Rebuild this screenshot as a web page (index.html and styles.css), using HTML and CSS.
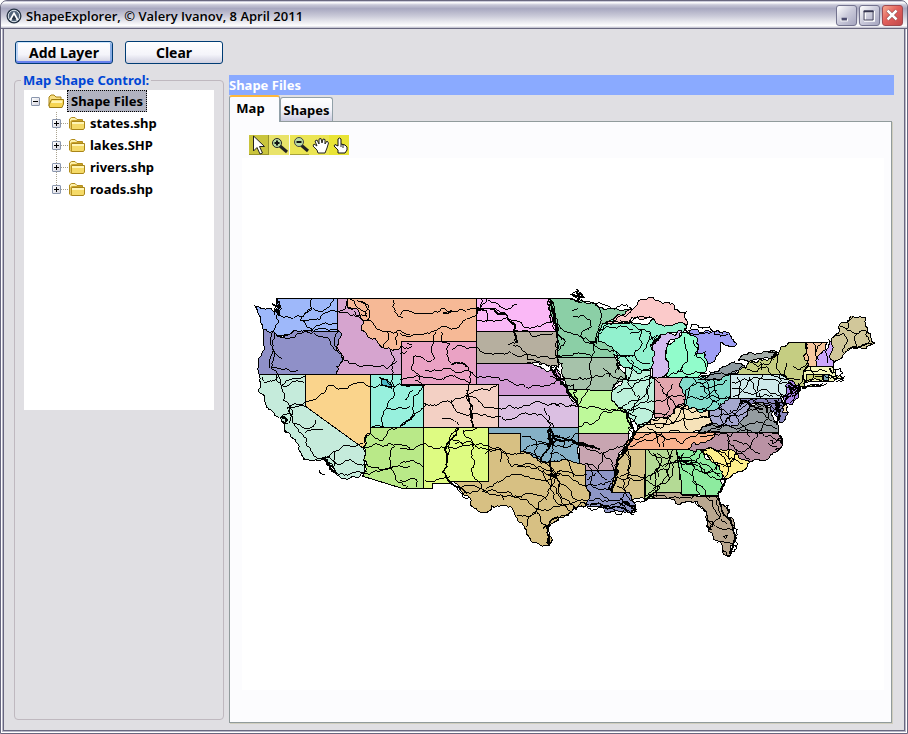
FILE: index.html
```
<!DOCTYPE html>
<html lang="en">
<head>
<meta charset="utf-8">
<title>ShapeExplorer</title>
<link rel="stylesheet" href="styles.css">
</head>
<body>
<svg class="defs" aria-hidden="true">
  <symbol id="folder" viewBox="0 0 16 16">
    <path d="M1 13V4L3 2H6L8 4H13V7" fill="#f8df83" stroke="#a88416"/>
    <path d="M1.5 14.5L1 12L3.500 6.500H15.500V11L14 14.500Z" fill="#f6d552" stroke="#9c7b10"/>
    <path d="M4 7.500H14.500L14 10H3Z" fill="#fff3b0"/>
  </symbol>
  <symbol id="folder-closed" viewBox="0 0 16 16">
    <path d="M.5 13V4L2.500 2.500H6L8 4.500H13.500V7" fill="#fdf0a8" stroke="#b28d1c"/>
    <path d="M2.500 14.500V6.500H15.500V13L14.500 14.500Z" fill="#f5da68" stroke="#a98519"/>
    <path d="M.5 13L2 14.500V6L4 5.500H13" fill="none" stroke="#c9a227"/>
    <path d="M3 7H15V9H3Z" fill="#fff5b5"/>
  </symbol>
</svg>
<div class="window">
  <header class="titlebar">
    <svg class="app-icon" viewBox="0 0 16 16" aria-hidden="true">
      <circle cx="8" cy="8" r="7.500" fill="#283546"/>
      <circle cx="8" cy="8" r="5.700" fill="#52647a" stroke="#d9e2ea"/>
      <path d="M3.500 11.500L8 3.500L12.500 11.500L10.500 12.500L8 8.500L5.500 12.500Z" fill="#fff"/>
      <path d="M8 7L5.500 11.500H10.500Z" fill="#283546"/>
    </svg>
    <h1>ShapeExplorer, © Valery Ivanov, 8 April 2011</h1>
    <button class="win-btn" aria-label="Minimize"><svg viewBox="0 0 21 21"><path d="M4 14H12V17H4Z" fill="#fff"/><path d="M5 13H11V16H5Z" fill="#4b4b6e"/></svg></button>
    <button class="win-btn" aria-label="Maximize"><svg viewBox="0 0 21 21"><path d="M5.500 6.500H15.500V16.500H5.500Z" fill="none" stroke="#fff" stroke-width="2"/><path d="M4.500 5.500H14.500V15.500H4.500Z" fill="none" stroke="#33334f"/><path d="M4 5H15V7H4Z" fill="#33334f"/></svg></button>
    <button class="win-btn close" aria-label="Close"><svg viewBox="0 0 21 21"><path d="M5 5L15 15M15 5L5 15" stroke="#6e3030" stroke-width="4"/><path d="M5 5L15 15M15 5L5 15" stroke="#fff" stroke-width="3"/></svg></button>
  </header>
  <div class="content">
    <aside class="side">
      <div class="actions">
        <button class="btn default">Add Layer</button>
        <button class="btn">Clear</button>
      </div>
      <fieldset class="group">
        <legend>Map Shape Control:</legend>
        <ul class="tree">
          <li>
            <div class="node"><span class="toggle"></span><svg class="folder"><use href="#folder"/></svg><span class="label selected">Shape Files</span></div>
            <ul class="children">
              <li class="node"><span class="toggle plus"></span><svg class="folder"><use href="#folder-closed"/></svg><span class="label">states.shp</span></li>
              <li class="node"><span class="toggle plus"></span><svg class="folder"><use href="#folder-closed"/></svg><span class="label">lakes.SHP</span></li>
              <li class="node"><span class="toggle plus"></span><svg class="folder"><use href="#folder-closed"/></svg><span class="label">rivers.shp</span></li>
              <li class="node"><span class="toggle plus"></span><svg class="folder"><use href="#folder-closed"/></svg><span class="label">roads.shp</span></li>
            </ul>
          </li>
        </ul>
      </fieldset>
    </aside>
    <main class="main">
      <h2 class="banner">Shape Files</h2>
      <div class="tabs" role="tablist">
        <button class="tab active" role="tab" aria-selected="true">Map</button>
        <button class="tab" role="tab" aria-selected="false">Shapes</button>
      </div>
      <section class="panel">
        <div class="tools">
          <button class="tool t1" aria-label="Select"><svg viewBox="0 0 20 20"><path d="M4.500 1V16L8 12.500L11 19L13.500 18L10.500 11.500H15.500Z" fill="#fff" stroke="#222"/></svg></button>
          <button class="tool t2" aria-label="Zoom in"><svg viewBox="0 0 20 20"><path d="M11 11L18 17" stroke="#222" stroke-width="3"/><circle cx="8" cy="8" r="4.500" fill="#b9dca4" stroke="#222"/><path d="M5.500 8H10.500M8 5.500V10.500" stroke="#111" stroke-width="2"/></svg></button>
          <button class="tool t3" aria-label="Zoom out"><svg viewBox="0 0 20 20"><path d="M12 10L19 16" stroke="#222" stroke-width="3"/><circle cx="10" cy="7" r="4.500" fill="#b9dca4" stroke="#444"/><path d="M7.500 7H12.500" stroke="#111" stroke-width="2"/></svg></button>
          <button class="tool t4" aria-label="Pan"><svg viewBox="0 0 20 20"><path d="M9 18L8 15L4 11L5 9L8 11L6 6L8 5L10 9L10 4L12 3.500L13 8L14 4L16 4.500L16 9L18 6L19.500 8L18 13L16 18Z" fill="#fff" stroke="#222"/></svg></button>
          <button class="tool t5" aria-label="Identify"><svg viewBox="0 0 20 20"><path d="M9 18V15L5 11L6 9.500L9 11V4L10.500 3L12 4V9L16 10L18 12V15L16 18Z" fill="#fff" stroke="#111"/><path d="M14 10V13M12 9V12" stroke="#222"/></svg></button>
        </div>
        <svg class="map" viewBox="242 158 642 532" role="img" aria-label="United States with lakes, rivers and roads">
          <g class="states">
            <path fill="#9eb8fa" d="M276 298H337V331H313L277 336L273 331L263 329L260 322L259 315L255 306L258 306L262 309L270 308L275 311L278 306Z"/>
            <path fill="#8f90c8" d="M263 329L273 331L277 336L290 334L313 331H338L342 334L336 349L337 374H259L258 364L262 355L263 340Z"/>
            <path fill="#c5ebdb" d="M259 374H305V406L363 448L368 455L364 463V473L337 475L333 468L322 459L301 453L298 444L291 437L285 432L285 424L280 417L271 410L266 405L265 398L258 391L261 383Z"/>
            <path fill="#fad48c" d="M305 374H370V434L365 438L363 448L305 406Z"/>
            <path fill="#d6a4cf" d="M337 298H347V307L362 319L367 335L375 338L384 348L401 346V374H337L336 349L342 334L338 331Z"/>
            <path fill="#f6b996" d="M347 298H476V341H401V346L384 348L375 338L367 335L362 319L347 307Z"/>
            <path fill="#eaa2c4" d="M401 341H476V384H401Z"/>
            <path fill="#97f0dd" d="M370 374H401V385H423V427H370Z"/>
            <path fill="#f3d0c4" d="M423 384H498V427H423Z"/>
            <path fill="#b9e988" d="M370 427H423V488H401L362 476L366 470L363 460L363 448L365 438L370 434Z"/>
            <path fill="#defb82" d="M423 427H488V481H448L450 483H432V488H423Z"/>
            <path fill="#fab8f6" d="M476 298H551L553 315L556 331H476Z"/>
            <path fill="#b6af9f" d="M476 331H556L559 340L558 367L545 364L527 363H476Z"/>
            <path fill="#d29bd4" d="M476 363H527L537 366L556 368L561 378L566 388L569 395H498V384H476Z"/>
            <path fill="#dbbfe2" d="M498 395H569L574 402L578 406V427H498Z"/>
            <path fill="#85b0c6" d="M488 427H578L581 443L580 463L571 461L560 461L546 462L533 457L520 453V433H488Z"/>
            <path fill="#d7c083" d="M488 433H520V453L533 457L546 462L560 461L571 461L580 463L585 465V482L590 492L587 504L572 511L560 517L551 524L547 532L550 546L540 545L531 541L526 534L524 526L515 513L506 505L492 506L486 513L473 507L470 498L460 490L448 481H488Z"/>
            <path fill="#8bcfa6" d="M551 298H569L575 301L588 303L599 307L612 308L630 309L612 320L604 327L598 333V342L614 352L615 357H557V331L553 320Z"/>
            <path fill="#a6c2aa" d="M557 357H615L619 368L626 376L616 384L612 391L567 389L561 372Z"/>
            <path fill="#bef99a" d="M567 389L612 391L614 400L623 408L631 420L633 427L629 433H578V406Z"/>
            <path fill="#c8a5b1" d="M578 433H629L624 445L617 458V470H585V465L580 463Z"/>
            <path fill="#8e96c6" d="M585 470H616L613 492H631L632 500L636 509L629 513L621 511L612 511L598 506H587L590 492L585 482Z"/>
            <path fill="#d7c38a" d="M627 449H646L644 499L632 500L630 492H612L616 475V460Z"/>
            <path fill="#b4da95" d="M646 449H676L681 480V492H656L655 498H645Z"/>
            <path fill="#8deb9f" d="M676 449H700L704 455L714 463L722 478L721 491L718 496L681 494V480Z"/>
            <path fill="#b9a78f" d="M653 492H680L682 495L713 497L719 494L721 504L728 517L734 533V543L730 556L723 553L722 545L713 536L708 530L707 512L697 501L689 501L680 505L670 498H653Z"/>
            <path fill="#fdee8b" d="M700 450L710 447L725 451L735 452L750 462L740 472L725 480L720 470L710 459Z"/>
            <path fill="#ba92a4" d="M717 432H779L783 442L781 447L773 453L769 458L757 460L750 462L735 452L725 451L710 447L700 450L688 449L700 443Z"/>
            <path fill="#f9b38e" d="M635 432H717L710 440L700 443L688 449H627L630 440Z"/>
            <path fill="#f6e2b9" d="M635 432L638 425L648 423L657 418L672 414L684 404L695 408L707 410L712 423L700 430L693 432Z"/>
            <path fill="#949ca0" d="M693 432L713 423L727 425L740 422L750 407L762 402L770 408L773 417L778 425V432Z"/>
            <path fill="#a5a8cf" d="M729 398H740V404L750 405L748 415L740 422L727 425L713 423L710 411L720 406Z"/>
            <path fill="#8a88bd" d="M740 398H781L783 412H788L785 417L780 423L775 415L770 406L762 402L750 405L740 404Z"/>
            <path fill="#83dccb" d="M683 377H700L713 379L730 374V397L720 406L710 411L695 408L684 404Z"/>
            <path fill="#cfe9ea" d="M730 374H780L790 380L787 393L782 398H730Z"/>
            <path fill="#c5cd82" d="M735 374L747 367L748 360L773 358L780 348L792 342H806L808 366L806 380L801 387L789 380L780 374Z"/>
            <path fill="#f7c79d" d="M806 342H828L825 350L818 356L816 366H808Z"/>
            <path fill="#cca6fb" d="M816 366L818 356L825 350L828 339L832 343L833 366Z"/>
            <path fill="#d1c79a" d="M833 366L832 343L835 335L840 330L841 323L847 322L851 316L866 318L867 331L871 338L875 343L862 349L850 349L843 355L838 360Z"/>
            <path fill="#f4f6b8" d="M808 366H833L836 375L843 380L834 381L806 382Z"/>
            <path fill="#c9cf74" d="M806 374H822V380L806 383Z"/>
            <path fill="#7ba5b5" d="M823 374H828V380H823Z"/>
            <path fill="#c5cd82" d="M802 388L812 384L822 384L812 387Z"/>
            <path fill="#a784e6" d="M790 380L800 387L798 398L792 405L783 399L787 393Z"/>
            <path fill="#fbe3b8" d="M781 400L788 412H783Z"/>
            <path fill="#91fccb" d="M667 377L669 362L666 354L672 343L687 333L697 338L699 348L695 355L705 352L708 360L706 371L698 377Z"/>
            <path fill="#92f1ce" d="M603 323L623 323L645 325L672 326L682 322L687 327L683 332L667 333L658 338L652 347L650 370L625 368L617 358L614 352L598 342V333Z"/>
            <path fill="#bdf0db" d="M625 368L650 370L654 378V410L648 423L637 425L630 418L622 408L612 397L613 390L627 378Z"/>
            <path fill="#e2a6ae" d="M654 377H683L684 404L672 414L655 418Z"/>
          </g>
          <g class="lakes">
            <path fill="#fbcaca" d="M605 323L620 315L636 306L648 298L668 302L675 310L686 312L687 325L682 322L672 326L660 325L650 318L640 320L625 323Z"/>
            <path fill="#d3bbef" d="M652 347L657 339L667 333L682 331L675 339L667 347L665 353L668 362L662 377L653 377L651 367Z"/>
            <path fill="#9fa0f6" d="M688 330L695 329L705 331L717 330L728 332L732 339L737 344L731 347L721 342L718 355L713 362L708 364L705 352L695 355L699 348L697 338Z"/>
            <path fill="#8e9aa0" d="M700 379L710 372L726 366L743 365L745 368L728 375L713 379Z"/>
            <path fill="#a3aba7" d="M738 360L743 355L760 354L766 351L777 352L773 359L750 361Z"/>
            <path fill="#48b5c4" d="M380 377L387 379L391 384V388L385 386L381 382Z"/>
          </g>
          <g class="roads">
            <g transform="translate(250 280) scale(.333333)">
              <path d="M80 56L90 75L78 110L72 150L68 200L62 265L82 283L95 320L100 360L130 430L170 475L225 540L260 580"/>
              <path d="M90 105L130 115L160 110L185 85L188 56M150 120L210 118L265 95L290 75L295 56M150 120L170 140L190 155L215 145L260 150M80 165L190 158L235 175L255 210L280 240L330 260L415 265L440 245"/>
              <path d="M70 215L95 235M62 265L110 265L145 272M85 285L95 320L165 290M35 290L45 310L85 290M100 320L150 305L162 308M112 385L165 365L205 350L240 315L275 325L320 310L358 320L480 320M95 410L122 400L115 430L95 425M130 430L165 445L190 440L195 420M165 460L220 450"/>
              <path d="M220 535L250 515L290 495L340 490L355 460L400 480L440 445M255 515L250 545L350 550L480 560M340 580L400 570L440 560M340 500L400 500L480 510M435 500L420 560L475 620"/>
              <path d="M265 95L300 105L335 120L370 130L410 155L450 150L480 165M295 85L350 110L355 75L325 65M430 60L435 95L460 115M410 155L400 200M440 155L440 195M265 210L265 150M415 200L425 270L435 340L410 385L400 440L360 445M410 385L480 380M60 265L70 210L75 155"/>
              <path d="M78 75L88 65L84 105L80 90L75 105M218 535L240 548L255 575M115 395L120 385L128 410M385 290L425 315"/>
              <path d="M190 85L215 95L240 80L250 56M150 120L165 100L185 85M265 130L220 130L185 155M300 56L320 80L350 100M320 60L345 70L360 100L350 120M110 385L125 375L165 380M225 530L255 545L260 580L350 575"/>
            </g>
            <g transform="translate(400 280) scale(.333333)">
              <path d="M0 105L20 90L45 100L95 100L160 95L230 85L270 85L320 105L345 150L460 158M0 160L50 165L110 150L170 145L230 105L260 55M110 155L100 185L103 235L90 245L40 230M125 155L125 185L150 190L155 255L205 260L210 310L200 350L215 400L220 440"/>
              <path d="M155 210L230 200L270 220L330 215L380 225L480 225M0 300L60 290L140 290L210 310M75 270L130 265L200 270L260 290L325 300L385 325L440 315L480 300M40 230L35 270L60 300M45 300L70 315M0 440L40 400L75 370L120 370L180 355L230 355L245 370L330 375L480 380"/>
              <path d="M125 415L160 420L175 435M155 360L170 395L215 400L240 405L340 415L400 400L440 420L460 440M200 350L270 330L290 315M40 400L40 350L75 315M435 385L450 440L450 500L420 545M0 505L50 500L75 490L110 505L170 505L270 500L370 515L440 490L480 480"/>
              <path d="M175 440L150 490L140 540L128 575L150 605L180 635L205 655M190 450L220 490L215 520L225 545L220 590L245 620L200 635M165 490L210 485L230 500L300 505L300 545M255 520L305 510L335 560L390 550L430 575L480 585M160 480L190 495M75 600L130 595L150 590M245 635L310 600L380 590L480 575M0 550L45 545L70 560M0 600L50 600L50 620"/>
              <path d="M245 55L245 90M230 90L260 90L260 125M265 60L300 80L330 85L350 75M320 110L345 130L340 155L350 170L345 190L325 195M340 195L380 220L385 240L440 255L480 275M280 85L320 105M450 60L460 95L460 130L470 160L465 220L475 265M465 100L465 150M365 470L410 485L415 540M370 520L430 545L475 540M445 450L460 510L450 570L480 620M415 485L460 490L480 465M190 455L230 445M0 440L45 400M305 645L310 660M245 635L380 640L440 660"/>
              <path d="M230 123L350 123L460 123M0 220L20 215M5 200L25 205L35 200M20 190L35 195M15 360L40 330"/>
              <path class="heavy" d="M230 85L270 85L290 100L320 105L345 135L342 155L350 190M130 100L155 92M175 445L150 480L140 540L128 575L150 605L200 640M0 440L45 400M200 330L205 350L215 400L218 440M450 450L450 500L420 545M155 255L205 260M450 55L460 95L465 130"/>
            </g>
            <g transform="translate(550 280) scale(.333333)">
              <path d="M60 45L80 35L95 45L85 58L70 50M70 110L100 105L120 120L125 140L95 155L100 180L130 190M140 70L155 105L145 150L130 190L125 290L110 325L85 380L60 380M5 120L50 155L90 170L130 190L200 215L240 250L300 265M65 90L85 85M110 145L118 148"/>
              <path d="M0 290L50 295L130 292L230 295M20 230L125 230M160 265L180 290M140 190L160 140L200 115L245 90M60 60L140 70L185 85L245 85M165 130L220 130L300 155L310 190M210 120L280 110L300 110M240 160L275 150L245 230M280 215L300 160M200 240L300 250M145 150L200 145L250 150"/>
              <path d="M300 180L325 165M0 375L90 378L135 380L220 388L260 410L235 445M85 440L130 430L160 395L220 385M190 325L215 290L300 285M200 340L250 320L305 290M215 385L260 360L305 305M220 395L280 385L350 405M235 290L270 350L245 400M300 290L290 365L230 400M305 295L340 340L400 390M290 370L350 355L400 350M350 350L370 310M355 350L340 410M400 350L440 310L510 300M400 360L470 350L500 330M410 370L430 310M405 290L470 340M245 240L230 300"/>
              <path d="M265 435L300 420L370 430L410 370L400 420L415 450M270 445L330 430L400 415L470 410M290 440L330 500M250 475L300 460L350 480L400 490L450 460L510 455M330 455L340 500M400 385L430 400L470 390M240 500L300 480L390 455M200 215L195 280M190 225L240 225M235 440L250 460L240 490L215 530L200 560L200 600L185 640M5 490L60 500L90 490L120 510L160 520L200 500L235 480M85 460L60 480L10 470L0 440M0 570L60 590L190 595L280 595M40 500L60 470M160 520L190 570M230 510L240 560L220 630M160 515L120 590L110 600M105 550L170 600M0 580L50 620L80 660M0 520L50 540L70 590M295 640L340 600L380 540L440 510M300 600L350 570L380 540M380 540L420 540L430 600L470 650M320 520L370 530M310 520L330 560L320 650M410 550L510 590M400 520L390 600M420 535L510 580M350 570L360 600M370 510L345 560"/>
              <path d="M300 200L325 165M0 260L25 290L50 325L65 350L85 375M5 60L10 100L20 160L25 200L20 230M380 275L470 280M405 170L410 210L395 275M430 180L440 230L470 270M400 260L350 290M405 150L440 165L500 155"/>
              <path class="heavy" d="M0 265L25 290L50 325L65 350L85 375M210 385L235 400L235 425L250 445L250 465L235 495L215 530L200 560L195 610L185 640M300 195L330 165M5 465L50 480L90 495L130 505M385 530L410 550M395 385L410 375M120 185L140 190M405 150L415 160M200 250L205 270"/>
            </g>
            <g transform="translate(700 300) scale(.333333)">
              <path d="M0 230L60 220L130 195M0 260L80 240M15 240L60 330L100 370M0 290L90 290M40 240L60 300M0 330L80 290M95 245L150 240L240 250L290 265M95 265L200 270L270 290M110 230L115 295M150 240L170 290L220 290M190 225L185 295M100 290L150 230M240 225L245 290M140 185L210 190L230 160L230 200L300 240M140 210L200 200L260 240M260 190L260 240M180 185L185 210M280 200L300 210L320 190"/>
              <path d="M320 130L325 195L310 230L295 262L270 290L235 300L205 340L190 370L160 420L110 460L70 500M340 130L345 160L355 180M370 125L350 155M380 150L385 190M400 110L430 100L440 130L430 160M420 80L455 95L495 90L510 125M460 50L440 90M470 100L470 140L440 150M345 230L400 230L430 240M310 215L380 215M330 200L335 240M310 250L360 240M390 200L410 240M310 265L380 250"/>
              <path d="M0 345L50 350L120 310L160 295L200 300L230 330M10 380L90 350L190 340L225 370M50 390L130 320L150 300M90 330L120 370L150 410M0 400L80 375L160 370L230 385M0 410L90 410L180 400L240 420M100 420L160 450L180 460M80 400L110 450L150 480M205 430L230 440M215 400L245 410L240 430M0 450L60 455L130 490M20 460L50 510M50 450L80 490L75 530M110 450L90 500L50 490M150 295L180 320L215 310L250 320M60 310L70 380M130 300L120 320M160 300L190 320M90 420L90 480"/>
              <path d="M230 300L240 340L230 370M255 300L240 360M260 260L285 270L295 265L270 310M295 250L300 270L280 280"/>
              <path class="heavy" d="M270 245L300 262L275 290M320 130L320 148M195 315L200 340M235 305L225 340M390 205L400 220M300 262L270 270M205 155L230 158L220 170M120 305L150 310L190 325M265 255L275 280L255 300M225 300L240 350L230 375M385 225L410 240M460 145L480 140L515 132"/>
            </g>
            <g transform="translate(430 420) scale(.333333)">
              <path d="M90 210L150 205L220 230L290 240L320 270L290 320M320 265L460 240L540 240M320 270L350 320L350 370M260 285L320 270L355 210L380 160M355 165L415 270L430 280M380 160L435 260M380 155L470 165M340 150L375 200L410 260M470 130L480 190L540 210M320 120L370 150M260 140L330 140L380 160"/>
              <path class="heavy" d="M360 20L365 70L350 80M365 35L400 55L440 68L490 78L510 90M360 120L365 165M340 325L360 305L385 290M350 335L358 375M430 260L440 270M480 255L520 258L540 262"/>
            </g>
            <g transform="translate(600 420) scale(.333333)">
              <path d="M60 170L135 175L200 130L240 120M75 90L90 130L70 180L65 235M50 200L90 240L140 240M0 220L60 240M135 180L180 200L135 230M145 90L185 115L175 170M230 90L250 150L290 200L300 225M240 130L360 135M240 125L320 90M260 130L360 180L375 170M160 225L240 235L330 235M315 225L345 270L380 310M350 230L360 290L330 320M330 310L370 330L400 330M350 370L400 370M200 90L220 140L145 230M370 350L385 345L378 355Z"/>
              <path class="heavy" d="M355 230L380 290L400 325L400 370L390 400M60 235L85 250L110 275M320 315L335 330M0 255L30 265L60 262L80 270"/>
            </g>
          </g>
          <g class="coast">
            <path d="M277 299L279 305L275 311L279 315M281 416L285 424L287 432M303 460L309 460M320 470L325 475M550 298L553 313L557 331L559 350L558 366L567 385L577 402M632 433L624 445L617 459L616 477L612 492M585 505L600 507L615 512L630 513L637 509M589 504L572 511L560 517L551 524L548 532L550 546M722 505L731 522L735 539L730 556L722 550M695 501L706 515L709 530M610 509L625 505L634 514M635 432L638 425L650 422L672 414L685 404M840 380L845 376M835 369L843 373L843 380L836 382M776 415L780 402L784 410M770 440L783 438L782 446L775 450M690 329L714 332L728 334"/>
            <path class="heavy" d="M272 304L276 306L280 308M572 295L580 293L583 297L577 301M577 289L579 297M276 310L280 316M654 498L644 501M620 505L627 502L635 512M722 478L718 494M282 417L286 422M322 458L331 466L337 474"/>
          </g>
        </svg>
      </section>
    </main>
  </div>
</div>
<script src="map.js"></script>
</body>
</html>
```
FILE: map.js
```
// Adds natural irregularity to coastlines, rivers and roads.
// The offset depends only on a segment's end points, so neighbours share edges.
function noise(x, y) {
  const n = Math.sin(x * 12.9898 + y * 78.233) * 43758.5453;
  return (n - Math.floor(n)) * 2 - 1;
}

function split(a, b, minLength, amount) {
  const dx = b[0] - a[0];
  const dy = b[1] - a[1];
  const length = Math.hypot(dx, dy);
  if (length < minLength) return [b];
  const mx = (a[0] + b[0]) / 2;
  const my = (a[1] + b[1]) / 2;
  const flip = a[0] < b[0] || (a[0] === b[0] && a[1] < b[1]) ? 1 : -1;
  const k = noise(mx, my) * amount * flip;
  const mid = [mx - dy * k, my + dx * k];
  return split(a, mid, minLength, amount).concat(split(mid, b, minLength, amount));
}

function roughen(path, minLength, amount, keepStraight) {
  const out = [];
  let at = [0, 0];
  let start = at;
  const lineTo = (to, straight) => {
    const far = Math.hypot(to[0] - at[0], to[1] - at[1]) > 28;
    const points = keepStraight && (straight || far) ? [to] : split(at, to, minLength, amount);
    points.forEach(p => out.push("L" + p[0].toFixed(2) + " " + p[1].toFixed(2)));
    at = to;
  };
  for (const [, cmd, args] of path.getAttribute("d").matchAll(/([MLHVZ])([^MLHVZ]*)/g)) {
    const n = args.trim().split(/\s+/).map(Number);
    if (cmd === "M") {
      at = start = n;
      out.push("M" + n.join(" "));
    } else if (cmd === "L") lineTo(n, false);
    else if (cmd === "H") lineTo([n[0], at[1]], true);
    else if (cmd === "V") lineTo([at[0], n[0]], true);
    else {
      lineTo(start, start[0] === at[0] || start[1] === at[1]);
      out.push("Z");
    }
  }
  path.setAttribute("d", out.join(""));
}

document.querySelectorAll(".states path, .lakes path").forEach(p => roughen(p, 3, 0.25, true));
document.querySelectorAll(".roads path").forEach(p => roughen(p, 9, 0.2, false));
document.querySelectorAll(".coast path").forEach(p => roughen(p, 3, 0.35, false));
```
FILE: styles.css
```
* { box-sizing: border-box; }

body {
  margin: 0;
  background: #fff;
  font-family: "Comic Sans MS", "Noto Sans", sans-serif;
  font-size: 13px;
  font-weight: 700;
  color: #000;
}

h1, h2, ul { margin: 0; padding: 0; font-size: inherit; }
ul { list-style: none; }
button { font: inherit; color: inherit; padding: 0; }
.defs { display: none; }

.window {
  display: flex;
  flex-direction: column;
  min-height: 100vh;
  border: 1px solid #68677f;
  border-radius: 7px 7px 0 0;
  background: #e0dfe3;
  box-shadow: inset 0 0 0 1px #fff, inset 0 0 0 2px #b8b7c8, inset 0 0 0 3px #68677f;
}

.titlebar {
  display: flex;
  align-items: center;
  gap: 2px;
  height: 28px;
  padding: 2px 4px 0 5px;
  border-radius: 6px 6px 0 0;
  border-bottom: 1px solid #68677f;
  background: linear-gradient(#b3b3c9, #fff 6%, #c8c8d8 14%, #a8a8c0 28%, #c9c9d8 55%, #fff 92%, #b8b7c8);
}

.titlebar h1 {
  flex: 1;
  font-family: "Trebuchet MS", "Open Sans", sans-serif;
  font-size: 13px;
  font-weight: 600;
  line-height: 18px;
  white-space: nowrap;
}

.app-icon { width: 16px; height: 16px; margin-right: 2px; }

.win-btn {
  width: 21px;
  height: 21px;
  border: 1px solid #73738f;
  border-radius: 3px;
  background: linear-gradient(135deg, #fff, #c9c9da 50%, #a5a5bf);
}

.win-btn svg { display: block; width: 19px; height: 19px; }
.win-btn.close { border-color: #a04a50; background: linear-gradient(135deg, #f6aa90, #e2605c 45%, #c2484c); }

.content {
  flex: 1;
  display: flex;
  gap: 5px;
  padding: 12px 13px 10px 13px;
}

.side { flex: none; width: 210px; display: flex; flex-direction: column; }
.actions { display: flex; gap: 12px; padding: 0 1px; }

.btn {
  flex: 1;
  height: 23px;
  border: 1px solid #003c74;
  border-radius: 3px;
  background: linear-gradient(#fff, #f4f4fa 60%, #cfcfdf);
  font-size: 14px;
  line-height: 20px;
}

.btn.default { box-shadow: inset 0 1px #cee7ff, inset 0 -2px #6982ee, inset 2px 0 #bcd4f6, inset -2px 0 #89ade4; }

.group {
  flex: 1;
  min-width: 0;
  margin: 7px 0 3px;
  padding: 1px 9px 0;
  border: 1px solid #bfb8bf;
  border-radius: 4px;
}

.group legend { padding: 0 2px; margin-left: -3px; line-height: 18px; color: #0046d5; }

.tree { height: 320px; padding: 0 0 0 7px; background: #fff; }
.node { display: flex; align-items: center; height: 22px; }

.toggle {
  flex: none;
  width: 9px;
  height: 9px;
  margin-right: 8px;
  border: 1px solid #8a96ad;
  border-radius: 1px;
  background:
    linear-gradient(#000, #000) center / 5px 1px no-repeat,
    linear-gradient(135deg, #fff, #d5d5df);
}

.toggle.plus {
  background:
    linear-gradient(#000, #000) center / 5px 1px no-repeat,
    linear-gradient(#000, #000) center / 1px 5px no-repeat,
    linear-gradient(135deg, #fff, #d5d5df);
}

.folder { flex: none; width: 16px; height: 16px; margin-right: 3px; }
.label { padding: 0 2px; line-height: 20px; border: 1px solid transparent; white-space: nowrap; }
.label.selected { padding: 0 3px; background: #b1b3c0; border: 1px dotted #000; }

.children {
  margin-left: 21px;
  background: repeating-linear-gradient(#aaa38f 0 1px, transparent 1px 2px) 4px 0 / 1px 77px no-repeat;
}

.children .folder { margin-right: 2px; }
.children .node { background: repeating-linear-gradient(90deg, #aaa38f 0 1px, transparent 1px 2px) 9px 11px / 8px 1px no-repeat; }

.main { flex: 1; min-width: 0; display: flex; flex-direction: column; padding-top: 34px; }
.banner { height: 20px; line-height: 20px; background: #8aaaff; color: #fff; }
.tabs { display: flex; align-items: flex-end; height: 26px; }

.tab {
  width: 53px;
  height: 24px;
  border: 1px solid #91a0a8;
  border-bottom: 0;
  border-radius: 3px 3px 0 0;
  background: linear-gradient(#fff, #f5f5fb 50%, #cccce0);
  line-height: 22px;
  text-align: center;
}

.tab.active {
  position: relative;
  width: 51px;
  height: 27px;
  margin-bottom: -1px;
  padding: 0 8px 4px 0;
  border-top: 2px solid #ffb83c;
  background: #fcfcfe;
  line-height: 20px;
}

.panel {
  flex: 1;
  margin-right: 2px;
  padding: 13px 7px 30px 12px;
  border: 1px solid #919b9c;
  background: #fcfcfe;
  box-shadow: 1px 1px #d0cebf;
}

.tools { display: flex; margin: 0 0 3px 7px; }
.tool { width: 20px; height: 20px; border: 0; }
.tool svg { display: block; width: 20px; height: 20px; }
.t1 { background: #c9c43c; box-shadow: inset -1px -1px #97922c; }
.t2 { background: #e9e36a; }
.t3 { background: #ebe554; box-shadow: inset 1px 0 #fcfcfe, inset 0 -1px #a7a239; }
.t4 { background: #ebe554; }
.t5 { background: #e9e435; }

.map { display: block; width: 100%; height: auto; background: #fff; shape-rendering: crispEdges; }
.states path { stroke: #000; stroke-width: 1; }
.lakes path { stroke: #000; stroke-width: 1; }
.roads path { fill: none; stroke: #000; stroke-width: 3; }
.roads .heavy { stroke-width: 5; }
.coast path { fill: none; stroke: #000; stroke-width: 1; }
.coast .heavy { stroke-width: 2; }
```
